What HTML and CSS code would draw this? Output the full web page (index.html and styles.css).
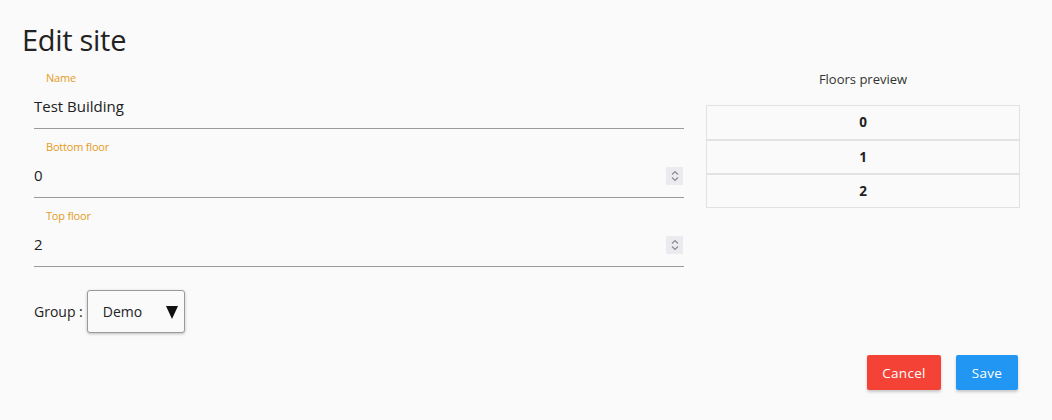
FILE: index.html
```html
<!DOCTYPE html>
<html>
<head>
<meta charset="utf-8">
<link rel="stylesheet" href="styles.css">
</head>
<body>
<div class="page">
  <h1 class="title">Edit site</h1>
  <div class="content">
    <div class="form">
      <div class="field">
        <label class="label">Name</label>
        <div class="input"><span>Test Building</span></div>
      </div>
      <div class="field">
        <label class="label">Bottom floor</label>
        <div class="input"><span>0</span><span class="spin"><svg width="10" height="14" viewBox="0 0 10 14"><path d="M2 5.5 L5 2.5 L8 5.5 M2 8.5 L5 11.5 L8 8.5" fill="none" stroke="#8a8a92" stroke-width="1.2"/></svg></span></div>
      </div>
      <div class="field">
        <label class="label">Top floor</label>
        <div class="input"><span>2</span><span class="spin"><svg width="10" height="14" viewBox="0 0 10 14"><path d="M2 5.5 L5 2.5 L8 5.5 M2 8.5 L5 11.5 L8 8.5" fill="none" stroke="#8a8a92" stroke-width="1.2"/></svg></span></div>
      </div>
      <div class="group">
        <span>Group :</span>
        <div class="select"><span>Demo</span><span class="arrow"></span></div>
      </div>
    </div>
    <div class="preview">
      <div class="preview-title">Floors preview</div>
      <table class="floors">
        <tr><td>0</td></tr>
        <tr><td>1</td></tr>
        <tr><td>2</td></tr>
      </table>
    </div>
  </div>
  <div class="actions">
    <button class="btn cancel">Cancel</button>
    <button class="btn save">Save</button>
  </div>
</div>
</body>
</html>
```

FILE: styles.css
```css
* { box-sizing: border-box; }
html, body { margin: 0; padding: 0; background: #fafafa; }
body {
  font-family: "Open Sans", "Noto Sans", sans-serif;
  color: #212121;
  width: 1052px;
  height: 420px;
  overflow: hidden;
}
.page { padding: 20px 32px 0 22px; }
.title {
  margin: 0;
  font-weight: 400;
  font-size: 29px;
  line-height: 40px;
  letter-spacing: -0.3px;
  color: #222;
}
.content {
  display: flex;
  gap: 22px;
  margin-top: 10px;
}
.form {
  width: 662px;
  flex-shrink: 0;
  padding-left: 12px;
}
.field { height: 69px; }
.label {
  display: block;
  padding-left: 12px;
  font-size: 11px;
  line-height: 16px;
  color: #e59a23;
  letter-spacing: -0.2px;
}
.input {
  display: flex;
  align-items: center;
  justify-content: space-between;
  height: 43px;
  border-bottom: 1px solid #9a9a9a;
  font-size: 15px;
  padding-bottom: 2px;
}
.spin {
  display: flex;
  align-items: center;
  justify-content: center;
  width: 17px;
  height: 18px;
  background: #ebebef;
  margin-right: 1px;
  margin-top: 1px;
}
.group {
  display: flex;
  align-items: center;
  gap: 4px;
  margin-top: 13px;
  font-size: 14px;
  color: #222;
}
.select {
  display: flex;
  align-items: center;
  justify-content: space-between;
  width: 98px;
  height: 43px;
  border: 1px solid #9a9a9a;
  border-radius: 3px;
  box-shadow: 0 1px 3px rgba(0,0,0,0.25);
  background: #fafafa;
  padding: 0 6px 0 15px;
  font-size: 14px;
}
.arrow {
  width: 0;
  height: 0;
  border-left: 6px solid transparent;
  border-right: 6px solid transparent;
  border-top: 13px solid #111;
  margin-top: 1px;
}
.preview {
  width: 314px;
  flex-shrink: 0;
  display: flex;
  flex-direction: column;
  align-items: center;
}
.preview-title {
  font-size: 13px;
  color: #333;
  line-height: 18px;
}
.floors {
  margin-top: 17px;
  width: 314px;
  border-collapse: collapse;
  border: 1px solid #e0e0e0;
}
.floors td {
  border: 1px solid #e2e2e2;
  border-top-width: 2px;
  text-align: center;
  font-weight: 700;
  font-size: 13.5px;
  height: 34px;
  color: #222;
}
.floors tr:first-child td { border-top-width: 1px; }
.actions {
  display: flex;
  justify-content: flex-end;
  gap: 15px;
  margin-top: 22px;
  padding-right: 2px;
}
.btn {
  font-family: inherit;
  border: none;
  border-radius: 2px;
  color: #fff;
  font-size: 13.5px;
  letter-spacing: 0.3px;
  height: 35px;
  padding: 0 10px;
  box-shadow: 0 2px 3px rgba(0,0,0,0.2);
}
.cancel { background: #f44336; width: 74px; }
.save { background: #2196f3; width: 62px; }
```
